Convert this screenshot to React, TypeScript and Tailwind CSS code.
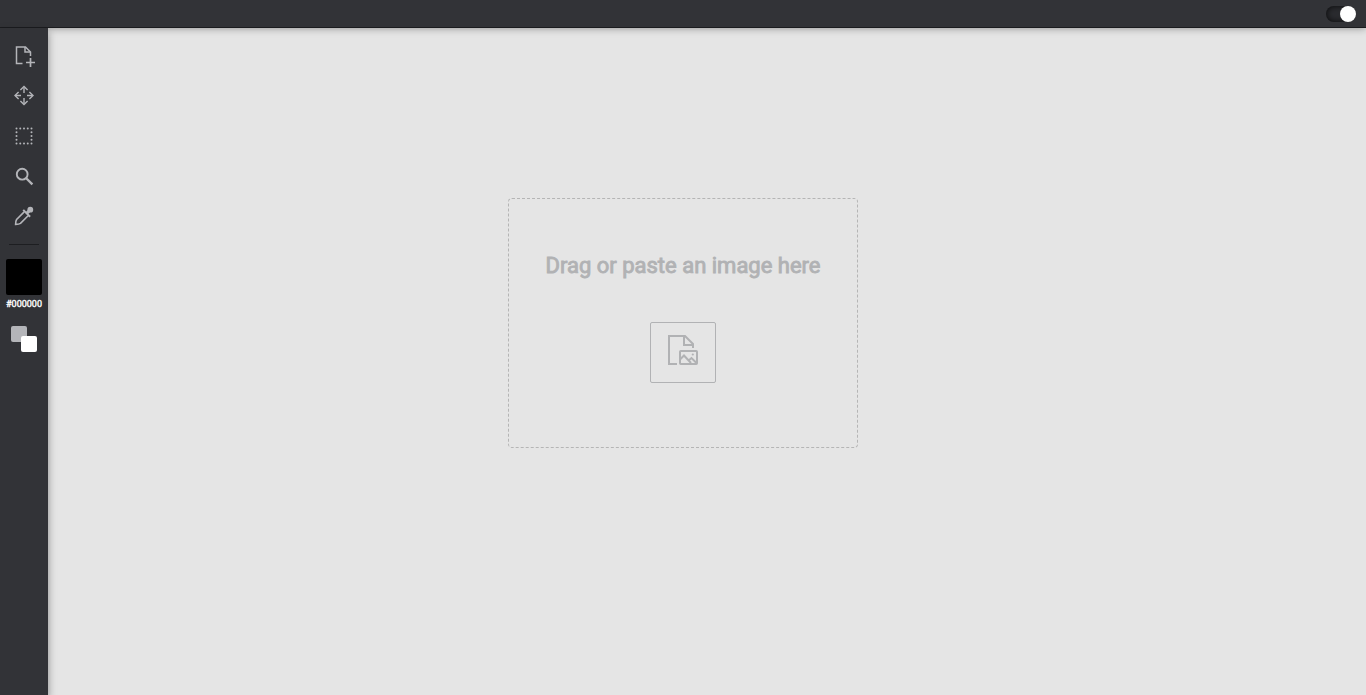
import { useState, type ReactNode } from "react";

function ToolButton({ label, children }: { label: string; children: ReactNode }) {
  return (
    <button type="button" aria-label={label} className="flex h-10 w-12 items-center justify-center text-[#b4b5b9] hover:text-white">
      <svg viewBox="0 0 24 24" className="size-6" fill="none" stroke="currentColor" strokeWidth="1.5" aria-hidden="true">
        {children}
      </svg>
    </button>
  );
}

const marqueeDots = [4.5, 8.25, 12, 15.75, 19.5];

export default function App() {
  const [light, setLight] = useState(true);

  return (
    <div className="flex min-h-screen flex-col bg-[#e5e5e5] font-[Roboto,sans-serif]">
      <header className="z-10 flex h-7 shrink-0 items-center justify-end border-b border-[#1b1c1f] bg-[#323337] px-[10px] shadow-[0_0_8px_rgba(0,0,0,0.4)]">
        <label className="relative flex cursor-pointer">
          <input
            type="checkbox"
            aria-label="Light theme"
            checked={light}
            onChange={(e) => setLight(e.target.checked)}
            className="peer h-4 w-[30px] cursor-pointer appearance-none rounded-full bg-[#2a2b2f] shadow-[inset_0_0_6px_rgba(0,0,0,0.8)]"
          />
          <span className="pointer-events-none absolute top-0 left-0 size-4 rounded-full bg-white peer-checked:right-0 peer-checked:left-auto" />
        </label>
      </header>
      <div className="flex flex-1">
        <aside className="z-20 flex w-12 shrink-0 flex-col items-center bg-[#323337] pt-2 shadow-[0_4px_8px_rgba(0,0,0,0.4)]">
          <ToolButton label="New file">
            <path d="M10.5 19.5H4.5V3H13.5L18.5 8V12" />
            <path d="M13 3V8H18.5" />
            <path d="M18.5 14V23M14 18.5H23" strokeWidth="1.7" />
          </ToolButton>
          <ToolButton label="Move">
            <path d="M12 9V3.5M12 14V19.5M9 11.5H4M15 11.5H20" strokeWidth="1.4" />
            <path d="M8.4 6.1L12 2.5L15.6 6.1M8.4 16.9L12 20.5L15.6 16.9M6.6 7.9L3 11.5L6.6 15.1M17.4 7.9L21 11.5L17.4 15.1" strokeWidth="1.4" />
          </ToolButton>
          <ToolButton label="Select">
            <g fill="currentColor" stroke="none">
              {marqueeDots.flatMap((x) =>
                marqueeDots
                  .filter((y) => x === 4.5 || x === 19.5 || y === 4.5 || y === 19.5)
                  .map((y) => <circle key={`${x}-${y}`} cx={x} cy={y} r="1" />),
              )}
            </g>
          </ToolButton>
          <ToolButton label="Zoom">
            <circle cx="10.2" cy="10.2" r="5.4" strokeWidth="1.9" />
            <path d="M14.2 14.2L20.4 20.4" strokeWidth="2.3" />
          </ToolButton>
          <ToolButton label="Pick color">
            <path d="M12.2 7.9L4.6 15.5Q3.6 17 3.6 20.4Q7 20.4 8.5 19.4L16.1 11.8" strokeWidth="1.6" />
            <path d="M11.2 5.9L18.1 12.8" strokeWidth="2" />
            <path d="M13.6 8.2L16.5 5.3L18.7 7.5L15.8 10.4Z" fill="currentColor" stroke="none" />
            <circle cx="18.3" cy="5.7" r="2.9" fill="currentColor" stroke="none" />
          </ToolButton>
          <hr className="mt-2 w-[30px] border-[#1d1e21]" />
          <button type="button" aria-label="Foreground color" className="mt-[14px] size-9 rounded-xs bg-black" />
          <output className="mt-1 text-[9px] leading-[10px] text-white [-webkit-text-stroke:0.04em]">#000000</output>
          <button type="button" aria-label="Swap colors" className="relative mt-[17px] h-[26px] w-[26px]">
            <span className="absolute top-0 left-0 size-4 rounded-xs bg-[#b4b5b9]" />
            <span className="absolute right-0 bottom-0 size-4 rounded-xs bg-white" />
          </button>
        </aside>
        <main className="flex flex-1 items-start justify-center pt-[170px] pr-12">
          <section className="flex h-[250px] w-[350px] flex-col items-center rounded-[4px] border border-dashed border-[#b5b5b5] pt-[53px] text-[#b1b2b4]">
            <h1 className="text-[22px] leading-7 font-normal [-webkit-text-stroke:0.04em]">Drag or paste an image here</h1>
            <button type="button" aria-label="Open image" className="mt-[42px] flex h-[61px] w-[66px] items-center justify-center rounded-xs border border-[#b1b2b4]">
              <svg viewBox="0 0 32 32" className="mb-[5px] size-8" fill="none" stroke="currentColor" strokeWidth="2" aria-hidden="true">
                <path d="M10 30H2V2H18L26 10V14" />
                <path d="M17 2V11H26" />
                <rect x="13" y="17" width="17" height="13" rx="0.8" />
                <path d="M13 25.5L17 21.5L24 29M21 27L24.5 24L29.5 29" />
                <circle cx="25.8" cy="20.5" r="1.1" fill="currentColor" stroke="none" />
              </svg>
            </button>
          </section>
        </main>
      </div>
    </div>
  );
}
